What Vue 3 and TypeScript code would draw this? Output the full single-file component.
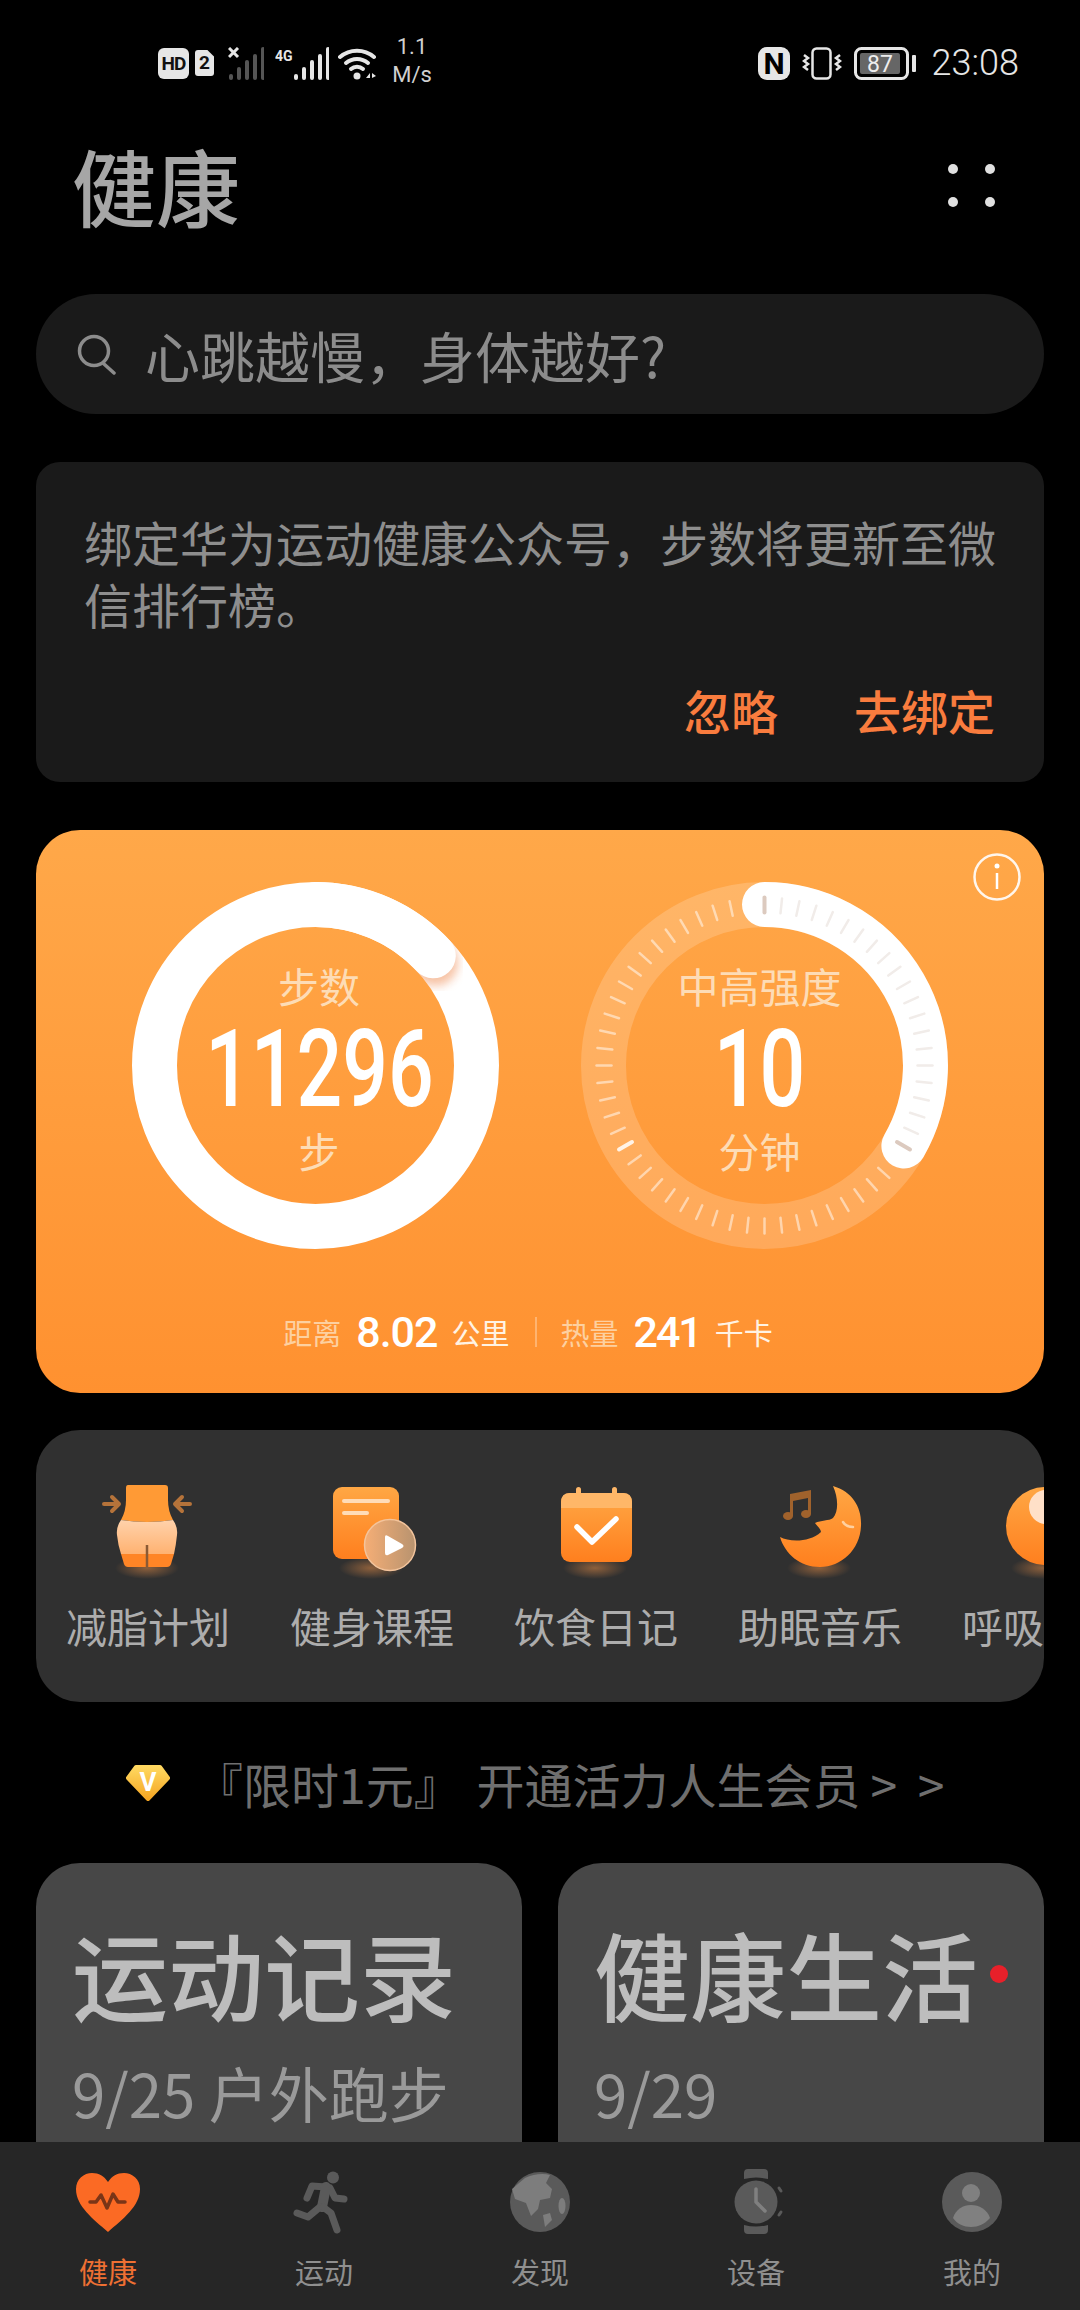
<script setup lang="ts">
interface Shortcut {
  key: string
  label: string
}

const shortcuts: Shortcut[] = [
  { key: 'waist', label: '减脂计划' },
  { key: 'course', label: '健身课程' },
  { key: 'diet', label: '饮食日记' },
  { key: 'sleep', label: '助眠音乐' },
  { key: 'breath', label: '呼吸训练' },
]

const tabs = [
  { key: 'health', label: '健康' },
  { key: 'sport', label: '运动' },
  { key: 'discover', label: '发现' },
  { key: 'device', label: '设备' },
  { key: 'me', label: '我的' },
]

const bars = [27, 20, 13, 7, 0]

// one tick every 6 degrees, the two under the round caps are hidden
const ticks = Array.from({ length: 60 }, (_, i) => i)
  .filter((i) => i !== 21 && i !== 59)
  .map((i) => {
    const a = (i * 6 * Math.PI) / 180
    let color = 'rgba(255,255,255,.5)'
    if (i <= 20) color = '#f1ece9'
    if (i === 0 || i === 20) color = '#dccabf'
    if (i === 40) color = 'rgba(255,255,255,.85)'
    return {
      x1: 183.5 + 153 * Math.sin(a),
      y1: 183.5 - 153 * Math.cos(a),
      x2: 183.5 + 168 * Math.sin(a),
      y2: 183.5 - 168 * Math.cos(a),
      color,
      width: i === 40 || i === 0 || i === 20 ? 4 : 2.5,
    }
  })
</script>

<template>
  <div class="page">
    <div class="main">
      <div class="status">
        <div class="status-left">
          <span class="hd">HD</span>
          <span class="sim">2</span>
          <svg class="sig1" width="36" height="33" viewBox="0 0 36 33">
            <path d="M1 1l9 9M10 1l-9 9" stroke="#e6e6e6" stroke-width="3" fill="none" />
            <rect v-for="(t, i) in bars" :key="i" :x="i === 0 ? 1 : 1 + i * 8" :y="t" width="4" :height="33 - t" rx="2" fill="#555" />
          </svg>
          <svg class="sig2" width="54" height="33" viewBox="0 0 54 33">
            <text x="0" y="14" class="four-g">4G</text>
            <rect v-for="(t, i) in bars" :key="i" :x="19 + i * 8" :y="t" width="4" :height="33 - t" rx="2" fill="#e6e6e6" />
          </svg>
          <svg class="wifi" width="40" height="33" viewBox="0 0 40 33">
            <g fill="none" stroke="#e6e6e6" stroke-width="4" stroke-linecap="round">
              <path d="M2 10a26 26 0 0 1 34 0" />
              <path d="M8 16a17 17 0 0 1 22 0" />
              <path d="M13 22a9 9 0 0 1 12 0" />
            </g>
            <circle cx="19" cy="29" r="3.5" fill="#e6e6e6" />
            <path d="M28 31l4-5v5zM34 26l4 3-4 2z" fill="#e6e6e6" />
          </svg>
          <div class="speed">
            <span>1.1</span>
            <span>M/s</span>
          </div>
        </div>
        <div class="status-right">
          <svg width="32" height="33" viewBox="0 0 32 33">
            <rect width="32" height="33" rx="9" fill="#e6e6e6" />
            <text x="16" y="27" text-anchor="middle" class="nfc">N</text>
          </svg>
          <svg width="40" height="33" viewBox="0 0 40 33">
            <rect x="10.5" y="1.5" width="18" height="30" rx="4" fill="none" stroke="#e6e6e6" stroke-width="2.5" />
            <g fill="none" stroke="#e6e6e6" stroke-width="2.5">
              <path d="M2 8l4 3-4 3 4 3-4 3 4 3" />
              <path d="M38 8l-4 3 4 3-4 3 4 3-4 3" />
            </g>
          </svg>
          <svg width="62" height="33" viewBox="0 0 62 33">
            <rect x="1.5" y="1.5" width="52" height="30" rx="6" fill="none" stroke="#e6e6e6" stroke-width="3" />
            <rect x="6" y="6" width="40" height="21" rx="2" fill="#666" />
            <text x="26" y="25" text-anchor="middle" class="batt">87</text>
            <rect x="58" y="8" width="4" height="17" rx="1" fill="#e6e6e6" />
          </svg>
          <span class="time">23:08</span>
        </div>
      </div>

      <div class="header">
        <h1 class="title">健康</h1>
        <div class="dots"><i></i><i></i><i></i><i></i></div>
      </div>

      <div class="search">
        <svg width="42" height="42" viewBox="0 0 42 42">
          <circle cx="18" cy="18" r="14.5" fill="none" stroke="#8c8c8c" stroke-width="3.5" />
          <path d="M28 31l10 9" stroke="#8c8c8c" stroke-width="3.5" fill="none" stroke-linecap="round" />
        </svg>
        <span>心跳越慢，身体越好?</span>
      </div>

      <div class="notice">
        <p>绑定华为运动健康公众号，步数将更新至微信排行榜。</p>
        <div class="notice-actions">
          <span>忽略</span>
          <span>去绑定</span>
        </div>
      </div>

      <div class="activity">
        <svg class="info" width="50" height="50" viewBox="0 0 50 50">
          <circle cx="25" cy="25" r="22.5" fill="none" stroke="#fff" stroke-width="2.5" opacity=".9" />
          <circle cx="25" cy="14" r="2.5" fill="#fff" />
          <path d="M25 21v16" stroke="#fff" stroke-width="2.5" />
        </svg>
        <div class="rings">
          <div class="ring">
            <svg width="367" height="367" viewBox="0 0 367 367">
              <defs>
                <mask id="ring-mask">
                  <circle cx="183.5" cy="183.5" r="161" fill="none" stroke="#fff" stroke-width="45" />
                </mask>
                <filter id="cap-blur" x="-50%" y="-50%" width="200%" height="200%">
                  <feGaussianBlur stdDeviation="5" />
                </filter>
              </defs>
              <circle cx="183.5" cy="183.5" r="161" fill="none" stroke="#fff" stroke-width="45" />
              <g mask="url(#ring-mask)">
                <circle cx="303" cy="81" r="23" fill="#f0925c" opacity=".55" filter="url(#cap-blur)" />
              </g>
              <path d="M183.5 22.5A161 161 0 0 1 301.3 73.8" fill="none" stroke="#fff" stroke-width="45" stroke-linecap="round" />
            </svg>
            <div class="ring-text steps">
              <span class="ring-label">步数</span>
              <span class="ring-num">11296</span>
              <span class="ring-label unit">步</span>
            </div>
          </div>
          <div class="ring">
            <svg width="367" height="367" viewBox="0 0 367 367">
              <circle cx="183.5" cy="183.5" r="161" fill="none" stroke="#fff" stroke-opacity=".18" stroke-width="45" />
              <path d="M183.5 22.5A161 161 0 0 1 322.9 264" fill="none" stroke="#fff" stroke-width="45" stroke-linecap="round" />
              <line
                v-for="(t, i) in ticks"
                :key="i"
                :x1="t.x1"
                :y1="t.y1"
                :x2="t.x2"
                :y2="t.y2"
                :stroke="t.color"
                :stroke-width="t.width"
                stroke-linecap="round"
              />
            </svg>
            <div class="ring-text intensity">
              <span class="ring-label">中高强度</span>
              <span class="ring-num">10</span>
              <span class="ring-label unit">分钟</span>
            </div>
          </div>
        </div>
        <div class="stats">
          <span class="stat-label">距离</span>
          <span class="stat-num">8.02</span>
          <span class="stat-unit">公里</span>
          <i class="stat-line"></i>
          <span class="stat-label">热量</span>
          <span class="stat-num tight">241</span>
          <span class="stat-unit">千卡</span>
        </div>
      </div>

      <div class="shortcuts">
        <div v-for="s in shortcuts" :key="s.key" class="shortcut">
          <svg width="100" height="100" viewBox="0 0 100 100">
            <defs>
              <linearGradient :id="'grad-' + s.key" x1="0" y1="0" x2="0" y2="1">
                <stop offset="0" stop-color="#ffa744" />
                <stop offset="1" stop-color="#ff7f1e" />
              </linearGradient>
              <radialGradient :id="'glow-' + s.key">
                <stop offset="0" stop-color="#ff9a4a" stop-opacity=".45" />
                <stop offset="1" stop-color="#ff9a4a" stop-opacity="0" />
              </radialGradient>
            </defs>
            <ellipse cx="50" cy="88" rx="32" ry="11" :fill="'url(#glow-' + s.key + ')'" />
            <g v-if="s.key === 'waist'">
              <defs>
                <linearGradient id="waist-mid" x1="0" y1="0" x2="0" y2="1">
                  <stop offset="0" stop-color="#ffd2ab" />
                  <stop offset="1" stop-color="#ffb271" />
                </linearGradient>
              </defs>
              <path d="M31 5h37q3 0 3 3v12q0 11 5 20-26 4-52 0 5-9 5-20V8q0-3 2-3z" fill="#ff9a35" />
              <path d="M24 40q26 4 52 0 5 7 4 15-1 10-3 19H24q-3-9-4-19-1-8 4-15z" fill="url(#waist-mid)" />
              <path d="M24 74h53l-3 10q-1 3-4 3H31q-3 0-4-3z" fill="#ff8526" />
              <path d="M50 65v22" stroke="#8b5a34" stroke-width="2.5" />
              <g fill="none" stroke="#b5733a" stroke-width="4" stroke-linecap="round" stroke-linejoin="round">
                <path d="M7 24h15M15 17l7 7-7 7" />
                <path d="M93 24H78M85 17l-7 7 7 7" />
              </g>
            </g>
            <g v-else-if="s.key === 'course'">
              <defs>
                <linearGradient id="play-grad" x1="0" y1="0" x2="1" y2="0">
                  <stop offset="0" stop-color="#f5ae76" />
                  <stop offset="1" stop-color="#b8936f" />
                </linearGradient>
              </defs>
              <rect x="12" y="7" width="66" height="72" rx="9" fill="url(#grad-course)" />
              <rect x="21" y="19" width="48" height="4" rx="2" fill="#ffdcb8" />
              <rect x="21" y="31" width="27" height="4" rx="2" fill="#ffdcb8" />
              <circle cx="69" cy="65" r="25.5" fill="url(#play-grad)" stroke="#f3c49c" stroke-width="1.5" />
              <path d="M64 57v16q0 3 3 2l14-7q3-2 0-4l-14-8q-3-2-3 1z" fill="#fff" />
            </g>
            <g v-else-if="s.key === 'diet'">
              <rect x="16" y="13" width="71" height="69" rx="9" fill="url(#grad-diet)" />
              <path d="M16 28V22q0-9 9-9h53q9 0 9 9v6z" fill="#ffb768" />
              <rect x="31" y="7" width="5" height="8" rx="2.5" fill="#ffb768" />
              <rect x="67" y="7" width="5" height="8" rx="2.5" fill="#ffb768" />
              <path d="M32 47l15 15 24-23" fill="none" stroke="#fff" stroke-width="5.5" stroke-linecap="round" stroke-linejoin="round" />
            </g>
            <g v-else-if="s.key === 'sleep'">
              <path d="M64 6C84 12 93 28 92 46 91 70 72 87 51 87 31 87 16 74 11 57 20 62 40 63 52 52 52 49 48 46 46 43 52 40 60 41 64 38 70 31 69 17 64 6z" fill="url(#grad-sleep)" />
              <path d="M74 42q3 5 10 5" fill="none" stroke="#ffd0a0" stroke-width="2.5" stroke-linecap="round" />
              <g fill="#a0622c">
                <ellipse cx="19" cy="36" rx="5" ry="4" />
                <ellipse cx="37" cy="34" rx="5" ry="4" />
                <path d="M21 14l21-4v24h-3V18l-15 3v15h-3z" />
              </g>
            </g>
            <g v-else>
              <circle cx="52" cy="46" r="39" fill="url(#grad-breath)" />
              <circle cx="53" cy="27" r="17" fill="#ffe0c8" />
            </g>
          </svg>
          <span class="shortcut-label">{{ s.label }}</span>
        </div>
      </div>

      <div class="promo">
        <svg width="46" height="38" viewBox="0 0 46 38">
          <defs>
            <linearGradient id="gem" x1="0" y1="0" x2="0" y2="1">
              <stop offset="0" stop-color="#ffd860" />
              <stop offset="1" stop-color="#f5a623" />
            </linearGradient>
          </defs>
          <path d="M11 3h24l8 11-20 21L3 14z" fill="url(#gem)" stroke="url(#gem)" stroke-width="4" stroke-linejoin="round" />
          <text x="23" y="27" text-anchor="middle" class="gem-v">V</text>
        </svg>
        <span>『限时1元』 开通活力人生会员<span class="promo-more">&gt; &gt;</span></span>
      </div>

      <div class="cards">
        <div class="card">
          <div class="card-title">运动记录</div>
          <div class="card-sub">9/25 户外跑步</div>
        </div>
        <div class="card">
          <div class="card-title">健康生活</div>
          <div class="card-sub">9/29</div>
          <i class="red-dot"></i>
        </div>
      </div>
    </div>

    <div class="tabbar">
      <div v-for="t in tabs" :key="t.key" class="tab" :class="{ active: t.key === 'health' }">
        <svg width="70" height="70" viewBox="0 0 70 70">
          <g v-if="t.key === 'health'">
            <path d="M35 64C20 51 3 38 3 21 3 11 11 5 19 5c7 0 12 3 16 9 4-6 9-9 16-9 8 0 16 6 16 16 0 17-17 30-32 43z" fill="#fb6a24" />
            <path d="M17 34h6l5-7 6 13 6-14 5 8h7" fill="none" stroke="#7a3517" stroke-width="3.5" stroke-linecap="round" stroke-linejoin="round" />
          </g>
          <g v-else-if="t.key === 'sport'" fill="none" stroke="#5a5a5a" stroke-width="7" stroke-linecap="round" stroke-linejoin="round">
            <circle cx="44" cy="9.5" r="6" fill="#5a5a5a" stroke="none" />
            <path d="M18 30l5-12 14 1" />
            <path d="M41 20l5 10 9 1" />
            <path d="M37 19l-4 20" stroke-width="10" />
            <path d="M31 39L19 49 8 45" />
            <path d="M34 39l8 6 6 17" />
          </g>
          <g v-else-if="t.key === 'discover'">
            <circle cx="35" cy="34" r="30" fill="#5a5a5a" />
            <path d="M20 10c8-4 18-5 25-3l-4 8 6 6-2 9-10 2-2 9-7 7-5-13-11-4-3-10z" fill="#7d7d7d" />
            <ellipse cx="57" cy="38" rx="3.5" ry="8" fill="#7d7d7d" />
            <path d="M38 47l7-2 2 7-7 7z" fill="#7d7d7d" />
          </g>
          <g v-else-if="t.key === 'device'">
            <path d="M23 5q0-4 4-4h16q4 0 4 4v6q-12-3-24 0zM23 57q12 3 24 0v5q0 4-4 4H27q-4 0-4-4z" fill="#5a5a5a" />
            <circle cx="35" cy="34" r="21.5" fill="#5a5a5a" />
            <path d="M35 21v13l9 9" fill="none" stroke="#808080" stroke-width="3.5" stroke-linecap="round" stroke-linejoin="round" />
            <path d="M58 20l2 3M60 44l-2 3" stroke="#5a5a5a" stroke-width="3" stroke-linecap="round" />
          </g>
          <g v-else>
            <circle cx="35" cy="34" r="30" fill="#5a5a5a" />
            <circle cx="34" cy="25" r="9" fill="#808080" />
            <path d="M16 50c3-9 10-13 18-13s16 4 19 13c-5 6-12 9-19 9s-14-3-18-9z" fill="#808080" />
          </g>
        </svg>
        <span>{{ t.label }}</span>
      </div>
    </div>
  </div>
</template>

<style>
html,
body {
  margin: 0;
  background: #000;
}
</style>

<style scoped>
.page {
  width: 1080px;
  height: 2310px;
  display: flex;
  flex-direction: column;
  background: #000;
  overflow: hidden;
  font-family: Roboto, "Noto Sans CJK SC", sans-serif;
}

.main {
  flex: 1;
  min-height: 0;
  overflow: hidden;
}

.status {
  height: 100px;
  padding: 26px 61px 0 158px;
  box-sizing: border-box;
  display: flex;
  justify-content: space-between;
  align-items: center;
  color: #e6e6e6;
}

.status-left,
.status-right {
  display: flex;
  align-items: center;
}

.status-right {
  gap: 12px;
}

.hd {
  width: 31px;
  height: 31px;
  border-radius: 6px;
  background: #e6e6e6;
  color: #111;
  font-size: 19px;
  font-weight: 700;
  line-height: 31px;
  text-align: center;
  letter-spacing: -1px;
}

.sim {
  width: 19px;
  height: 26px;
  margin-left: 6px;
  background: #e6e6e6;
  color: #111;
  font-size: 19px;
  font-weight: 700;
  line-height: 26px;
  text-align: center;
  clip-path: polygon(0 0, 65% 0, 100% 25%, 100% 100%, 0 100%);
  border-radius: 3px;
}

.sig1 {
  margin-left: 14px;
}

.sig2 {
  margin-left: 11px;
}

.wifi {
  margin-left: 9px;
}

.four-g {
  font-family: Roboto, sans-serif;
  font-size: 14px;
  font-weight: 700;
  fill: #e6e6e6;
}

.nfc {
  font-family: Roboto, sans-serif;
  font-size: 30px;
  font-weight: 700;
  fill: #000;
}

.batt {
  font-family: Roboto, sans-serif;
  font-size: 23px;
  fill: #eee;
}

.speed {
  margin-left: 13px;
  width: 42px;
  display: flex;
  flex-direction: column;
  align-items: center;
  font-size: 22px;
  line-height: 28px;
  margin-top: -4px;
  color: #d0d0d0;
}

.time {
  margin-left: 4px;
  font-size: 36px;
  font-weight: 300;
  line-height: 40px;
}

.header {
  height: 194px;
  padding: 0 85px 24px 72px;
  box-sizing: border-box;
  display: flex;
  justify-content: space-between;
  align-items: center;
}

.title {
  margin: 0;
  font-size: 84px;
  font-weight: 500;
  line-height: 100px;
  color: #a6a6a6;
  font-family: "Noto Sans CJK SC", sans-serif;
}

.dots {
  display: grid;
  grid-template-columns: 10px 10px;
  gap: 23px 27px;
}

.dots i {
  width: 10px;
  height: 10px;
  border-radius: 50%;
  background: #e0e0e0;
}

.search {
  height: 120px;
  margin: 0 36px;
  padding-left: 40px;
  border-radius: 60px;
  background: #1a1a1a;
  display: flex;
  align-items: center;
  gap: 27px;
  color: #8c8c8c;
  font-size: 55px;
  line-height: 70px;
  font-family: "Noto Sans CJK SC", sans-serif;
}

.notice {
  height: 320px;
  margin: 48px 36px 0;
  padding: 48px 40px 0 48px;
  box-sizing: border-box;
  border-radius: 24px;
  background: #1a1a1a;
  font-family: "Noto Sans CJK SC", sans-serif;
}

.notice p {
  margin: 0;
  font-size: 48px;
  line-height: 62px;
  color: #8e8e8e;
}

.notice-actions {
  margin: 45px 9px 0 0;
  display: flex;
  justify-content: flex-end;
  gap: 76px;
  font-size: 47px;
  font-weight: 500;
  line-height: 62px;
  color: #f97c3e;
}

.activity {
  position: relative;
  height: 563px;
  margin: 48px 36px 0;
  padding-top: 52px;
  box-sizing: border-box;
  border-radius: 44px;
  background: linear-gradient(180deg, #ffa849, #ff9130);
}

.info {
  position: absolute;
  top: 22px;
  right: 22px;
}

.rings {
  display: flex;
  justify-content: center;
  gap: 82px;
}

.ring {
  position: relative;
  width: 367px;
  height: 367px;
}

.ring svg {
  display: block;
}

.ring-text {
  position: absolute;
  inset: 0;
  padding-top: 78px;
  box-sizing: border-box;
  display: flex;
  flex-direction: column;
  align-items: center;
}

.ring-text.steps {
  padding-left: 7px;
}

.ring-text.intensity {
  padding-right: 10px;
}

.ring-label {
  font-size: 41px;
  line-height: 50px;
  color: #fddcb6;
  font-family: "Noto Sans CJK SC", sans-serif;
}

.ring-label.unit {
  margin-top: 2px;
}

.ring-num {
  height: 113px;
  font-size: 108px;
  line-height: 118px;
  font-weight: 500;
  color: #fff;
  transform: scaleX(0.745);
}

.stats {
  margin-top: 58px;
  padding-right: 24px;
  height: 50px;
  display: flex;
  justify-content: center;
  align-items: center;
}

.stat-label,
.stat-unit {
  font-size: 29px;
  line-height: 50px;
  font-family: "Noto Sans CJK SC", sans-serif;
}

.stat-label {
  color: #fdd0a0;
}

.stat-unit {
  color: #fff3e4;
  margin-left: 14px;
}

.stat-num {
  margin-left: 15px;
  font-size: 43px;
  line-height: 50px;
  font-weight: 500;
  letter-spacing: -1px;
  color: #fff;
}

.stat-num.tight {
  letter-spacing: -2px;
}

.stat-line {
  width: 2px;
  height: 30px;
  margin: 0 23px 0 26px;
  background: rgba(255, 255, 255, 0.3);
}

.shortcuts {
  height: 272px;
  margin: 37px 36px 0;
  border-radius: 44px;
  background: #303030;
  display: flex;
  overflow: hidden;
}

.shortcut {
  flex: 0 0 224px;
  padding-top: 50px;
  box-sizing: border-box;
  display: flex;
  flex-direction: column;
  align-items: center;
}

.shortcut svg {
  display: block;
  margin-right: 2px;
}

.shortcut-label {
  margin-top: 19px;
  font-size: 41px;
  line-height: 52px;
  color: #adadad;
  white-space: nowrap;
  font-family: "Noto Sans CJK SC", sans-serif;
}

.gem-v {
  font-family: Roboto, sans-serif;
  font-size: 26px;
  font-weight: 700;
  fill: #fff;
}

.promo {
  height: 161px;
  padding-left: 125px;
  box-sizing: border-box;
  display: flex;
  align-items: center;
  gap: 24px;
  font-size: 48px;
  line-height: 60px;
  color: #6f6f6f;
  white-space: nowrap;
  word-spacing: 4px;
  font-family: "Noto Sans CJK SC", sans-serif;
}

.promo-more {
  margin-left: 10px;
  word-spacing: 10px;
}

.cards {
  margin: 0 36px;
  display: flex;
  gap: 36px;
}

.card {
  position: relative;
  flex: 1;
  height: 340px;
  padding: 55px 0 0 36px;
  box-sizing: border-box;
  border-radius: 44px;
  background: #474747;
  font-family: "Noto Sans CJK SC", sans-serif;
}

.card-title {
  font-size: 96px;
  font-weight: 500;
  line-height: 110px;
  color: #bdbdbd;
  white-space: nowrap;
}

.card-sub {
  margin-top: 29px;
  font-size: 60px;
  line-height: 70px;
  color: #9a9a9a;
  white-space: nowrap;
}

.red-dot {
  position: absolute;
  left: 432px;
  top: 102px;
  width: 18px;
  height: 18px;
  border-radius: 50%;
  background: #e8202a;
}

.tabbar {
  flex: 0 0 168px;
  padding-top: 26px;
  box-sizing: border-box;
  background: #262626;
  display: flex;
}

.tab {
  flex: 1;
  display: flex;
  flex-direction: column;
  align-items: center;
  color: #8f8f8f;
  font-size: 29px;
  line-height: 40px;
  font-family: "Noto Sans CJK SC", sans-serif;
}

.tab svg {
  display: block;
  margin-bottom: 13px;
}

.tab.active {
  color: #ee7033;
}
</style>
